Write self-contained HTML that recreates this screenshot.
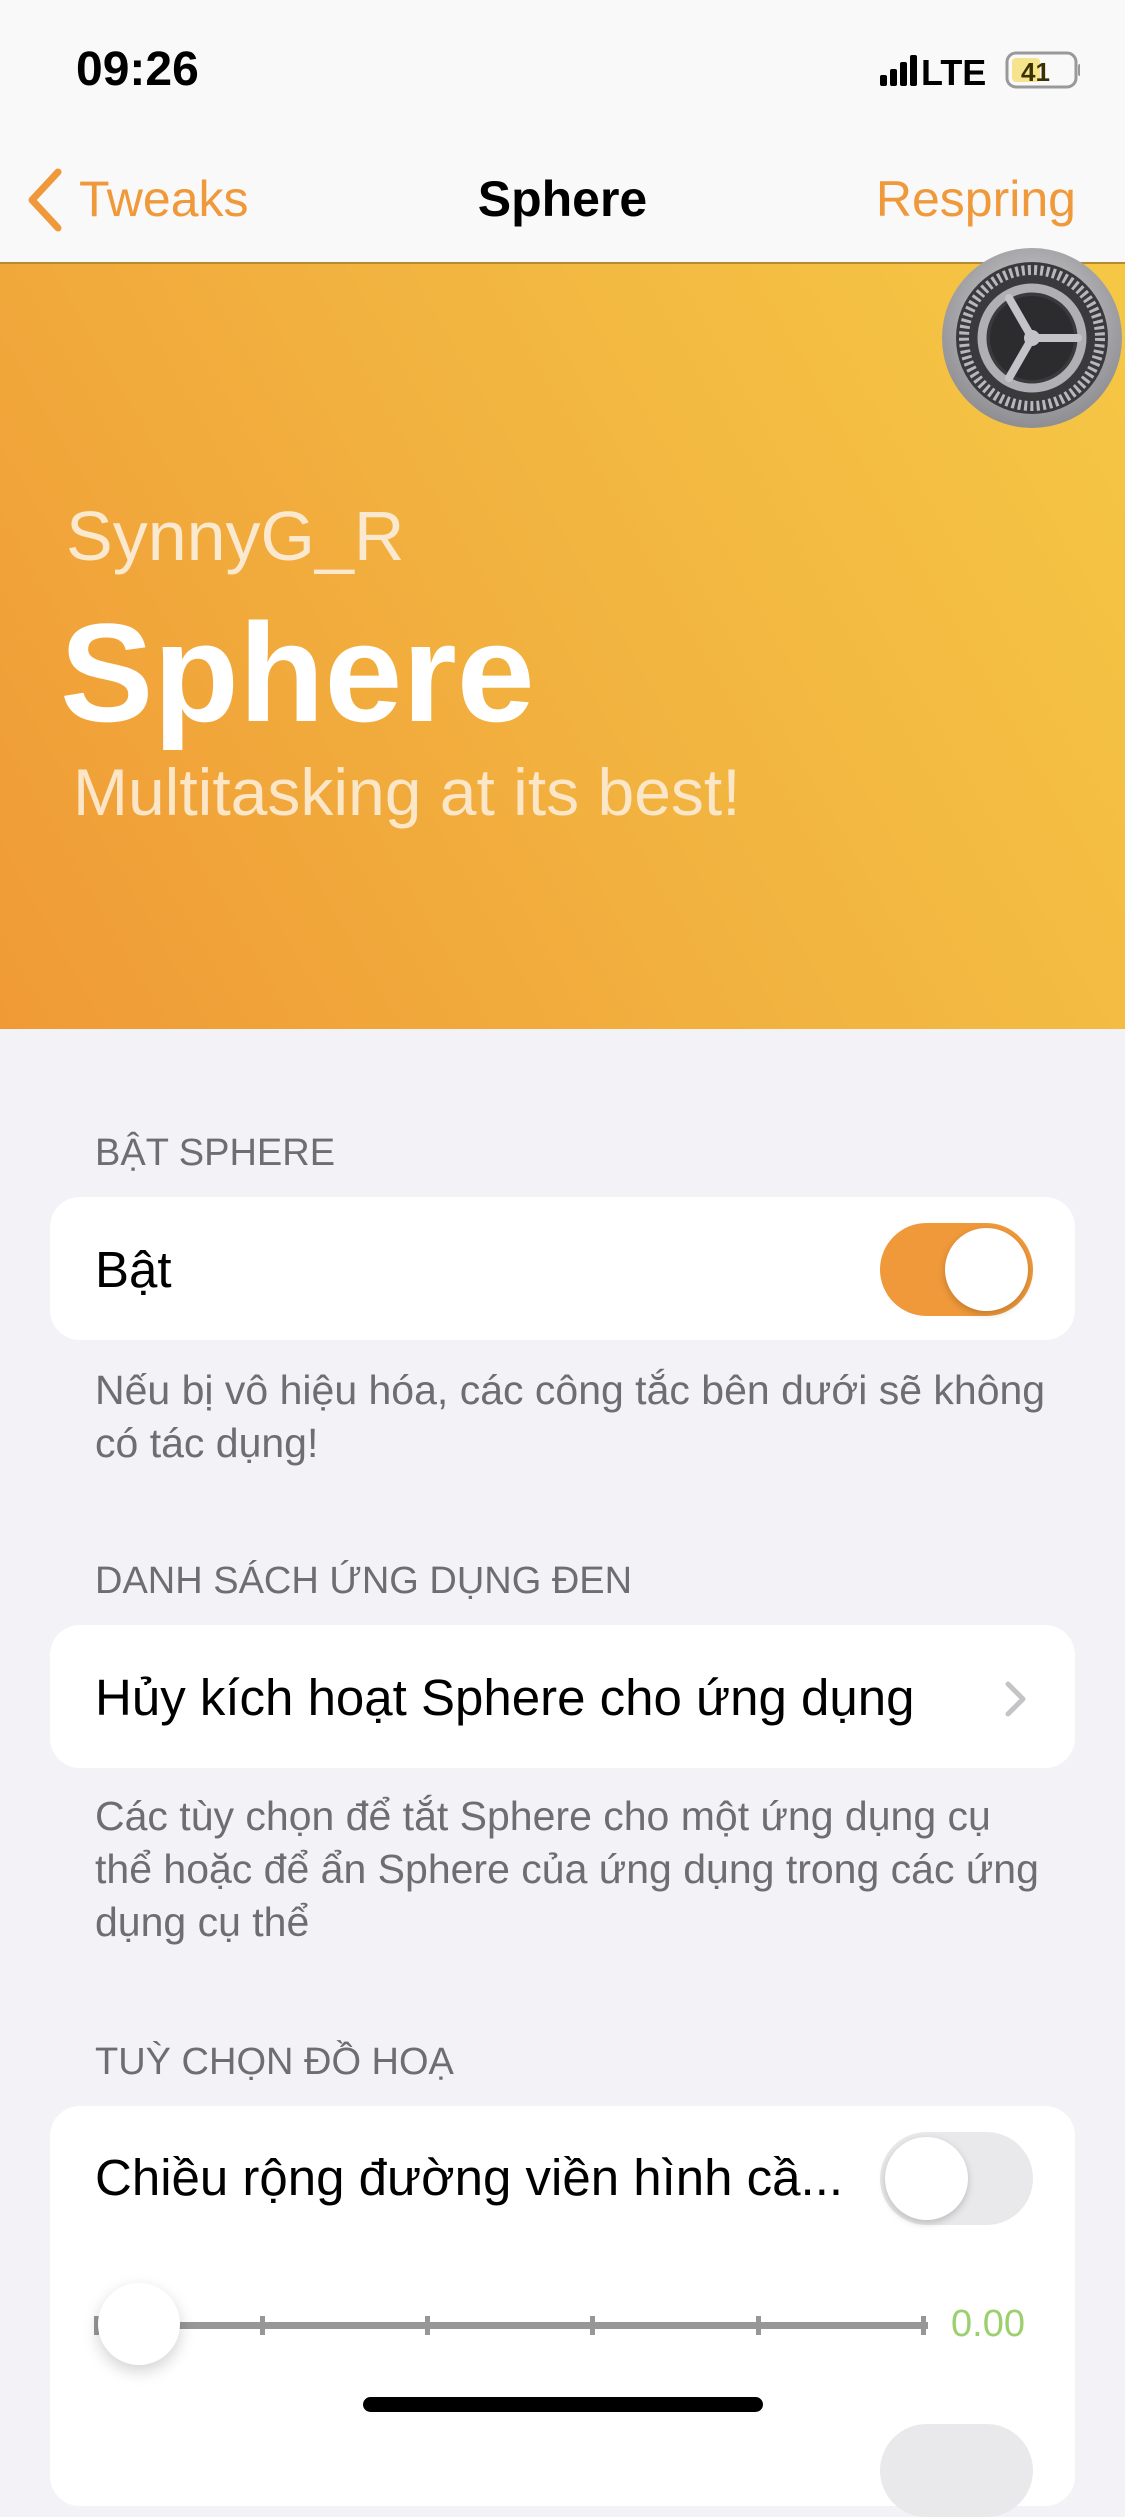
<!DOCTYPE html>
<html><head><meta charset="utf-8"><style>
*{margin:0;padding:0;box-sizing:border-box}
body{width:1125px;height:2436px;overflow:hidden;background:#f2f2f7;font-family:"Liberation Sans","Noto Sans CJK JP",sans-serif;position:relative}
.abs{position:absolute}
.top{left:0;top:0;width:1125px;height:264px;background:#f9f9f9;border-bottom:2px solid #b58a30}
.banner{left:0;top:264px;width:1125px;height:765px;background:linear-gradient(60deg,#f09a36 0%,#f2b540 55%,#f6c745 100%)}
.hdr{left:95px;font-size:38px;color:#6d6d72}
.card{left:50px;width:1025px;background:#fff;border-radius:30px}
.row{left:95px;font-size:51px;color:#000}
.foot{left:95px;font-size:41px;color:#6d6d72;line-height:53px;white-space:nowrap}
.tog{width:153px;height:93px;border-radius:47px}
.knob{position:absolute;top:5px;width:83px;height:83px;border-radius:50%;background:#fff;box-shadow:0 3px 8px rgba(0,0,0,.2)}
</style></head><body>
<div class="abs top"></div>
<div class="abs" style="left:76px;top:42px;font-size:48px;font-weight:bold">09:26</div>
<svg class="abs" style="left:880px;top:50px" width="200" height="42" viewBox="0 0 200 42">
<rect x="0" y="25" width="7" height="11" rx="2"/><rect x="10" y="19" width="7" height="17" rx="2"/><rect x="20" y="12" width="7" height="24" rx="2"/><rect x="30" y="5" width="7" height="31" rx="2"/>
<text x="41" y="35" font-family="Liberation Sans" font-weight="bold" font-size="36">LTE</text>
<rect x="127" y="3" width="69" height="34" rx="9" fill="none" stroke="#999" stroke-width="3"/>
<rect x="132" y="8" width="28" height="24" rx="4" fill="#f6e38e"/>
<rect x="198" y="14" width="4" height="12" rx="2" fill="#999"/>
<text x="141" y="31" font-family="Liberation Sans" font-weight="bold" font-size="26" fill="#3a3000">41</text>
</svg>
<svg class="abs" style="left:26px;top:168px" width="40" height="64" viewBox="0 0 40 64"><path d="M32 4 L6 32 L32 60" fill="none" stroke="#f0993a" stroke-width="7" stroke-linecap="round" stroke-linejoin="round"/></svg>
<div class="abs" style="left:79px;top:170px;font-size:50px;color:#f0993a">Tweaks</div>
<div class="abs" style="left:0;width:1125px;text-align:center;top:170px;font-size:50px;font-weight:bold">Sphere</div>
<div class="abs" style="right:49px;top:170px;font-size:50px;color:#f0993a">Respring</div>
<div class="abs banner"></div>
<svg class="abs" style="left:940px;top:246px" width="184" height="184" viewBox="0 0 184 184">
<defs><radialGradient id="g" cx="50%" cy="40%" r="60%"><stop offset="0" stop-color="#d8d8da"/><stop offset="1" stop-color="#8e8e92"/></radialGradient></defs>
<circle cx="92" cy="92" r="90" fill="url(#g)"/>
<circle cx="92" cy="92" r="76" fill="#3a3a3c"/>
<circle cx="92" cy="92" r="68" fill="none" stroke="#b8b8bc" stroke-width="10" stroke-dasharray="3 3.2"/>
<circle cx="92" cy="92" r="58" fill="#3a3a3c"/>
<circle cx="92" cy="92" r="50" fill="none" stroke="#b0b0b4" stroke-width="9"/>
<circle cx="92" cy="92" r="42" fill="#2c2c2e"/>
<g stroke="#c4c4c8" stroke-width="8" stroke-linecap="round"><line x1="92" y1="92" x2="138" y2="92"/><line x1="92" y1="92" x2="69" y2="52"/><line x1="92" y1="92" x2="69" y2="132"/></g>
<circle cx="92" cy="92" r="8" fill="#c4c4c8"/>
</svg>
<div class="abs" style="left:66px;top:496px;font-size:70px;color:#fbe9cf">SynnyG_R</div>
<div class="abs" style="left:60px;top:592px;font-size:140px;font-weight:bold;color:#fff">Sphere</div>
<div class="abs" style="left:73px;top:754px;font-size:66px;color:#fbe6c8">Multitasking at its best!</div>

<div class="abs hdr" style="top:1132px">BẬT SPHERE</div>
<div class="abs card" style="top:1197px;height:143px"></div>
<div class="abs row" style="top:1240px">Bật</div>
<div class="abs tog" style="left:880px;top:1223px;background:#f0993a"><div class="knob" style="left:65px"></div></div>
<div class="abs foot" style="top:1364px">Nếu bị vô hiệu hóa, các công tắc bên dưới sẽ không<br>có tác dụng!</div>

<div class="abs hdr" style="top:1560px">DANH SÁCH ỨNG DỤNG ĐEN</div>
<div class="abs card" style="top:1625px;height:143px"></div>
<div class="abs row" style="top:1668px">Hủy kích hoạt Sphere cho ứng dụng</div>
<svg class="abs" style="left:1004px;top:1680px" width="24" height="38" viewBox="0 0 24 38"><path d="M4 4 L19 19 L4 34" fill="none" stroke="#c4c4c7" stroke-width="5" stroke-linecap="round" stroke-linejoin="round"/></svg>
<div class="abs foot" style="top:1790px">Các tùy chọn để tắt Sphere cho một ứng dụng cụ<br>thể hoặc để ẩn Sphere của ứng dụng trong các ứng<br>dụng cụ thể</div>

<div class="abs hdr" style="top:2041px">TUỲ CHỌN ĐỒ HOẠ</div>
<div class="abs card" style="top:2106px;height:400px"></div>
<div class="abs row" style="top:2148px">Chiều rộng đường viền hình cầ...</div>
<div class="abs tog" style="left:880px;top:2132px;background:#e9e9eb"><div class="knob" style="left:5px"></div></div>
<svg class="abs" style="left:92px;top:2310px" width="840" height="30" viewBox="0 0 840 30">
<rect x="2" y="12" width="834" height="7" fill="#979797"/>
<g fill="#979797"><rect x="2" y="6" width="5" height="19"/><rect x="168" y="6" width="5" height="19"/><rect x="333" y="6" width="5" height="19"/><rect x="498" y="6" width="5" height="19"/><rect x="664" y="6" width="5" height="19"/><rect x="829" y="6" width="5" height="19"/></g>
</svg>
<div class="abs" style="left:98px;top:2283px;width:82px;height:82px;border-radius:50%;background:#fff;box-shadow:0 6px 16px rgba(0,0,0,.18)"></div>
<div class="abs" style="left:951px;top:2303px;font-size:38px;color:#9ccf6e">0.00</div>
<div class="abs tog" style="left:880px;top:2424px;background:#e9e9eb"></div>
<div class="abs" style="left:363px;top:2397px;width:400px;height:15px;border-radius:8px;background:#000"></div>
</body></html>
